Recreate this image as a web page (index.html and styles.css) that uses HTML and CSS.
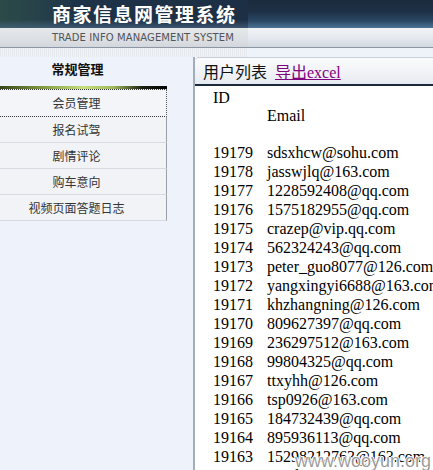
FILE: index.html
```html
<!DOCTYPE html>
<html lang="zh">
<head>
<meta charset="utf-8">
<title>商家信息网管理系统</title>
<link rel="stylesheet" href="styles.css">
</head>
<body>
<div class="top">
  <div class="banner"><div class="logo-dark"><span class="title">商家信息网管理系统</span></div></div>
  <div class="subbar"><div class="logo-light"><span class="sub">TRADE INFO MANAGEMENT SYSTEM</span></div></div>
  <div class="strip"><div class="strip-left"></div></div>
</div>
<div class="layout">
  <aside class="side">
    <div class="side-title">常规管理</div>
    <div class="side-bar"></div>
    <ul class="menu">
      <li class="menu-item active">会员管理</li>
      <li class="menu-item">报名试驾</li>
      <li class="menu-item">剧情评论</li>
      <li class="menu-item">购车意向</li>
      <li class="menu-item">视频页面答题日志</li>
    </ul>
  </aside>
  <main class="main">
    <div class="main-head"><span class="head-title">用户列表</span> <a class="export" href="#">导出excel</a></div>
    <div class="main-body">
      <div class="thead">
        <div class="row"><span class="c1">ID</span><span class="c2"></span></div>
        <div class="row"><span class="c1"></span><span class="c2">Email</span></div>
      </div>
      <div class="tbody">
        <div class="drow"><span class="c1">19179</span><span class="c2">sdsxhcw@sohu.com</span></div>
        <div class="drow"><span class="c1">19178</span><span class="c2">jasswjlq@163.com</span></div>
        <div class="drow"><span class="c1">19177</span><span class="c2">1228592408@qq.com</span></div>
        <div class="drow"><span class="c1">19176</span><span class="c2">1575182955@qq.com</span></div>
        <div class="drow"><span class="c1">19175</span><span class="c2">crazep@vip.qq.com</span></div>
        <div class="drow"><span class="c1">19174</span><span class="c2">562324243@qq.com</span></div>
        <div class="drow"><span class="c1">19173</span><span class="c2">peter_guo8077@126.com</span></div>
        <div class="drow"><span class="c1">19172</span><span class="c2">yangxingyi6688@163.com</span></div>
        <div class="drow"><span class="c1">19171</span><span class="c2">khzhangning@126.com</span></div>
        <div class="drow"><span class="c1">19170</span><span class="c2">809627397@qq.com</span></div>
        <div class="drow"><span class="c1">19169</span><span class="c2">236297512@163.com</span></div>
        <div class="drow"><span class="c1">19168</span><span class="c2">99804325@qq.com</span></div>
        <div class="drow"><span class="c1">19167</span><span class="c2">ttxyhh@126.com</span></div>
        <div class="drow"><span class="c1">19166</span><span class="c2">tsp0926@163.com</span></div>
        <div class="drow"><span class="c1">19165</span><span class="c2">184732439@qq.com</span></div>
        <div class="drow"><span class="c1">19164</span><span class="c2">895936113@qq.com</span></div>
        <div class="drow"><span class="c1">19163</span><span class="c2">15298212763@163.com</span></div>
        <div class="drow"><span class="c1">19162</span><span class="c2">jiandan5130@qq.com</span></div>
      </div>
    </div>
  </main>
</div>
<div class="watermark">www.wooyun.org</div>
</body>
</html>
```

FILE: styles.css
```css
html, body {
  margin: 0;
  padding: 0;
}
body {
  width: 433px;
  height: 470px;
  overflow: hidden;
  background: #eef2fa;
  font-family: "Liberation Serif", "Noto Sans CJK SC", serif;
  position: relative;
}
.top {
  display: flex;
  flex-direction: column;
}
.banner {
  height: 28px;
  background: linear-gradient(to bottom, #1b2b3d 0%, #1d2f44 40%, #2b4865 75%, #4e7499 100%);
}
.logo-dark {
  width: 248px;
  height: 28px;
  background:
    linear-gradient(to bottom, rgba(0,0,0,0) 70%, rgba(80,110,140,0.6) 100%),
    linear-gradient(to right, #2b4a48 0%, #27424a 15%, #1e3348 30%, #1d2f45 100%);
}
.title {
  display: block;
  padding-left: 52px;
  font-family: "Noto Sans CJK SC", sans-serif;
  font-weight: bold;
  font-size: 19px;
  letter-spacing: 1.5px;
  line-height: 27px;
  color: #ffffff;
}
.subbar {
  height: 19px;
  border-bottom: 1px solid #8c96a4;
  background: linear-gradient(to bottom, #f1f3f6 0%, #e4e8ee 55%, #d2d8e1 100%);
}
.logo-light {
  width: 248px;
  height: 19px;
  background: linear-gradient(to bottom, #e6e8ea 0%, #dcdfe3 60%, #d3d7dc 100%);
}
.sub {
  display: block;
  padding-left: 52px;
  font-family: "DejaVu Sans", sans-serif;
  font-size: 10px;
  letter-spacing: 0.1px;
  line-height: 19px;
  color: #505458;
}
.strip {
  height: 9px;
  background: #eef2f9;
}
.strip-left {
  width: 248px;
  height: 9px;
  background: repeating-linear-gradient(to right, #e6e9ee 0 1px, #f1f3f6 1px 2px);
}
.layout {
  display: flex;
  align-items: stretch;
  height: 413px;
}
.side {
  width: 193px;
  flex: none;
  background: #eef2fa;
}
.side-title {
  width: 155px;
  height: 29px;
  line-height: 23px;
  text-align: center;
  font-family: "Noto Sans CJK SC", sans-serif;
  font-weight: bold;
  font-size: 13px;
  color: #111;
}
.side-bar {
  width: 167px;
  height: 3px;
  background: linear-gradient(to right, #34461c 0%, #7f9a3e 25%, #c7e07c 50%, #9fb85a 68%, #1a2210 85%, #000 100%);
}
.menu {
  list-style: none;
  margin: 0;
  padding: 0;
  width: 167px;
}
.menu-item {
  height: 25px;
  line-height: 25px;
  padding-right: 13px;
  text-align: center;
  font-family: "Noto Sans CJK SC", sans-serif;
  font-size: 12px;
  color: #333;
  background: #f1f3f7;
  border-bottom: 1px solid #d6dae2;
  border-right: 1px solid #9a9ea6;
}
.menu-item.active {
  height: 26px;
  line-height: 26px;
  border-top: 1px dotted #333;
  border-bottom: 1px dotted #333;
  border-right: 1px dotted #555;
  background: #f3f5f9;
}
.main {
  flex: 1;
  border-left: 2px solid #a3acba;
  background: #ffffff;
  display: flex;
  flex-direction: column;
}
.main-head {
  height: 25px;
  padding-top: 1px;
  padding-left: 8px;
  line-height: 25px;
  border-top: 1px solid #c9cfd8;
  border-top-left-radius: 4px;
  border-bottom: 2px solid #1b2a3a;
  background: linear-gradient(to bottom, #fafbfc 0%, #f0f2f6 60%, #e6eaf0 100%);
  font-size: 16px;
  white-space: nowrap;
}
.head-title {
  font-family: "Noto Sans CJK SC", sans-serif;
  color: #111;
}
.export {
  margin-left: 4px;
  color: #800080;
  text-decoration: underline;
}
.main-body {
  padding: 3px 0 0 18px;
  font-size: 16px;
  color: #000;
}
.thead {
  padding-bottom: 18px;
}
.row {
  display: flex;
  height: 18px;
  line-height: 18px;
}
.drow {
  display: flex;
  height: 19px;
  line-height: 19px;
  white-space: nowrap;
}
.c1 {
  width: 54px;
  flex: none;
}
.c2 {
  flex: none;
}
.watermark {
  position: absolute;
  left: 295px;
  top: 451px;
  font-family: "Liberation Sans", sans-serif;
  font-size: 18px;
  line-height: 20px;
  color: rgba(120, 120, 120, 0.75);
  text-shadow: 1px 0 0 #fff, -1px 0 0 #fff, 0 1px 0 #fff, 0 -1px 0 #fff;
  white-space: nowrap;
}
```
